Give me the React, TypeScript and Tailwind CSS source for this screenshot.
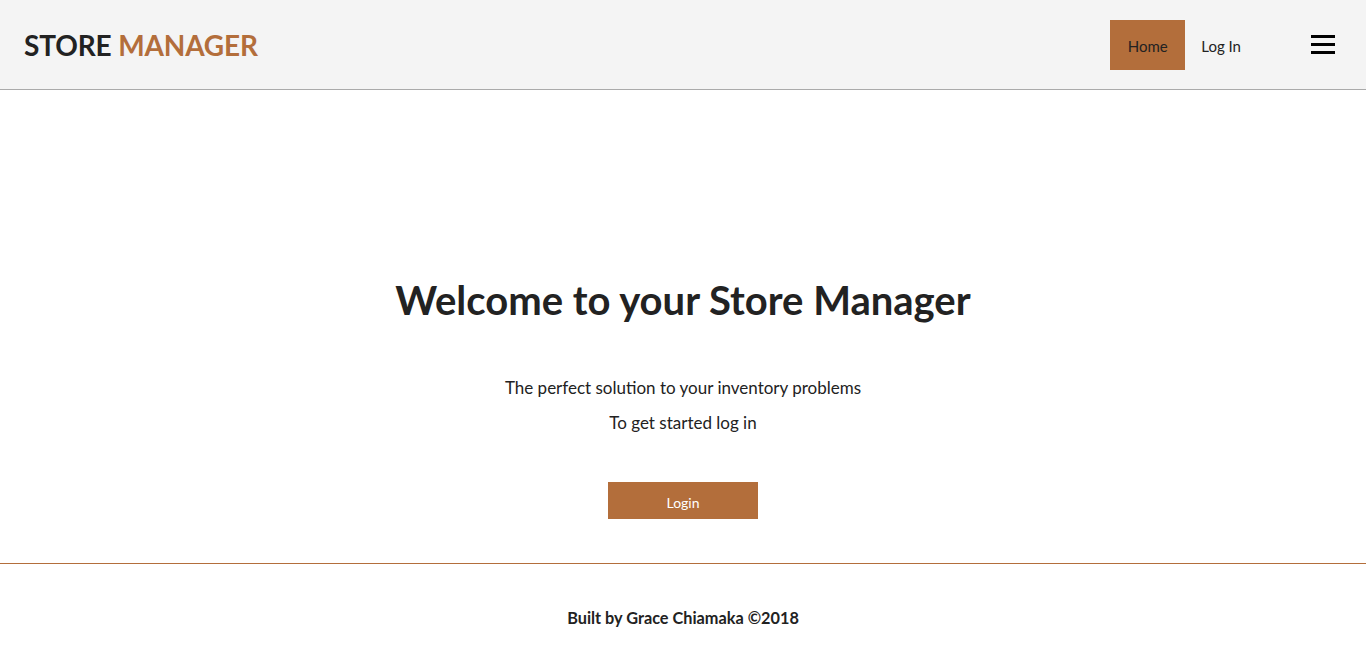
export default function App() {
  return (
    <div className="min-h-screen bg-white text-[#222] font-['Lato','Open_Sans',sans-serif]">
      <header className="h-[90px] bg-[#f4f4f4] border-b border-[#aaaaaa] flex items-center justify-between pl-6 pr-[31px]">
        <h1 className="text-[28px] font-bold tracking-[-0.15px]">
          <span className="text-[#222]">STORE </span>
          <span className="text-[#b36e3b]">MANAGER</span>
        </h1>
        <nav className="flex items-center">
          <a className="h-[50px] w-[75px] flex items-center justify-center pt-[3px] bg-[#b36e3b] text-[15px] text-[#222]">Home</a>
          <a className="ml-4 pt-[3px] text-[15px] text-[#222]">Log In</a>
          <button className="ml-[70px] flex flex-col gap-[5px] w-6">
            <span className="block h-[3px] w-6 bg-black"></span>
            <span className="block h-[3px] w-6 bg-black"></span>
            <span className="block h-[3px] w-6 bg-black"></span>
          </button>
        </nav>
      </header>
      <main className="h-[474px] border-b border-[#b36e3b] flex flex-col items-center pt-[186px]">
        <h2 className="text-[40px] font-bold leading-[48px]">Welcome to your Store Manager</h2>
        <p className="mt-[52px] text-[17px] leading-[24px]">The perfect solution to your inventory problems</p>
        <p className="mt-[11px] text-[17px] leading-[24px]">To get started log in</p>
        <button className="mt-[47px] w-[150px] h-[37px] pt-[3px] bg-[#b36e3b] text-white text-[14px]">Login</button>
      </main>
      <footer className="flex justify-center pt-[42px]">
        <p className="text-[16.3px] font-bold">Built by Grace Chiamaka ©2018</p>
      </footer>
    </div>
  );
}
